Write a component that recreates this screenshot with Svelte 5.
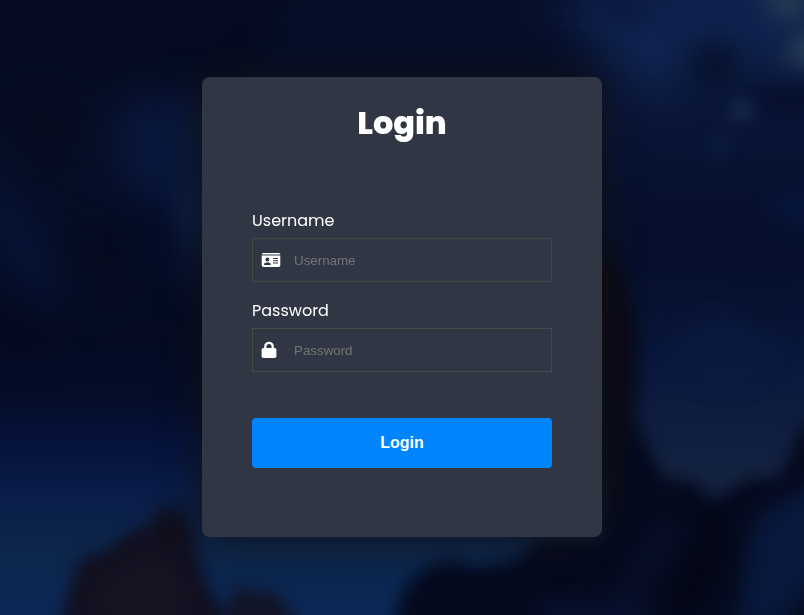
<script>
  let username = $state('');
  let password = $state('');
</script>

<main class="page">
  <svg class="backdrop" viewBox="0 0 804 615" preserveAspectRatio="xMidYMid slice" aria-hidden="true">
    <defs>
      <linearGradient id="sky" x1="0" y1="0" x2="0" y2="1">
        <stop offset="0" stop-color="#050b20" />
        <stop offset=".25" stop-color="#060e27" />
        <stop offset=".55" stop-color="#040b23" />
        <stop offset=".65" stop-color="#040d29" />
        <stop offset=".72" stop-color="#05123b" />
        <stop offset=".81" stop-color="#0a1e49" />
        <stop offset=".9" stop-color="#0d264c" />
        <stop offset="1" stop-color="#0b2856" />
      </linearGradient>
      <linearGradient id="east" x1="0" y1="0" x2="0" y2="1">
        <stop offset="0" stop-color="#0a1a45" />
        <stop offset=".18" stop-color="#0a183c" />
        <stop offset=".34" stop-color="#07112f" />
        <stop offset=".42" stop-color="#060f2b" />
        <stop offset=".57" stop-color="#09183d" />
        <stop offset=".73" stop-color="#152442" />
        <stop offset="1" stop-color="#15233f" />
      </linearGradient>
      <filter id="haze" x="-50%" y="-50%" width="200%" height="200%"><feGaussianBlur stdDeviation="20" /></filter>
      <filter id="soft" x="-50%" y="-50%" width="200%" height="200%"><feGaussianBlur stdDeviation="11" /></filter>
      <filter id="edge" x="-30%" y="-30%" width="160%" height="160%"><feGaussianBlur stdDeviation="8" /></filter>
    </defs>
    <rect width="804" height="615" fill="url(#sky)" />

    <!-- night clouds -->
    <g filter="url(#haze)">
      <path d="M560-50H870V680H560Z" fill="url(#east)" />
      <path d="M300-30H590L620 85H260Z" fill="#060f2a" />
      <path d="M550 0H660L804-30V58L750 65 720 35 690 50 670 95 620 75Z" fill="#10234f" />
      <path d="M110 120Q165 75 230 110V300L165 250 190 220 140 200 120 160Z" fill="#09183d" />
      <path d="M-20 170Q35 210 65 290 50 330 15 270L-20 220Z" fill="#061538" />
      <ellipse cx="95" cy="262" rx="30" ry="35" fill="#050b1e" />
      <ellipse cx="45" cy="130" rx="30" ry="40" fill="#050b1e" />
      <ellipse cx="20" cy="325" rx="35" ry="20" fill="#05091e" />
    </g>
    <g filter="url(#soft)">
      <path d="M600 0H646L648 24H600Z" fill="#0a193f" />
      <path d="M695 48L725 40 740 75 715 92 690 78Z" fill="#07132f" />
      <path d="M758-20H808V14L779 22Z" fill="#263a54" />
      <path d="M785 55L804 28 830 40V68L785 62Z" fill="#2a3f58" />
      <path d="M755 90H825V112H760Z" fill="#060d2a" />
      <ellipse cx="147" cy="228" rx="22" ry="9" fill="#050b22" />
      <ellipse cx="195" cy="210" rx="16" ry="32" fill="#0c1d42" />
      <ellipse cx="727" cy="350" rx="48" ry="34" fill="#0a1b46" opacity=".5" />
      <ellipse cx="798" cy="208" rx="25" ry="18" fill="#081944" opacity=".65" />
      <ellipse cx="762" cy="312" rx="18" ry="12" fill="#07112c" />
    </g>
    <g filter="url(#edge)">
      <ellipse cx="742" cy="111" rx="10" ry="10" fill="#1c2d50" />
      <ellipse cx="718" cy="145" rx="11" ry="12" fill="#0c1c3c" />
    </g>

    <!-- foreground rocks -->
    <g filter="url(#edge)">
      <path d="M590 255H620L631 300 638 345 634 420 649 448 665 478 694 480 711 501 728 492 746 478 778 478 789 458 797 435 830 400V640H388L404 588 430 565 450 560 475 568 515 560 540 538H600Z" fill="#050a1e" />
      <path d="M600 240L622 270 637 320 638 385 628 435 620 490 600 510Z" fill="#0b0b19" />
      <path d="M60 640L67 595 80 560 108 550 128 533 149 526 158 508 183 507 193 528 199 570 219 607 227 640Z" fill="#11101f" />
      <path d="M220 640L227 604 240 584 257 593 273 590 297 620V640Z" fill="#121427" />
    </g>
    <g filter="url(#soft)">
      <path d="M755 520L785 500 825 480V570L785 620 735 640 745 570Z" fill="#08193d" />
      <path d="M655 520L685 535 660 565 635 600 605 635 622 575Z" fill="#080f29" />
      <path d="M705 500L728 520 715 580 690 620 665 610 694 545Z" fill="#030615" />
      <path d="M545 600L650 605V630H540Z" fill="#071130" />
      <path d="M93 580L155 548 185 560 195 630H90Z" fill="#161323" />
    </g>
  </svg>

  <form class="card" onsubmit={(e) => e.preventDefault()}>
    <h1>Login</h1>
    <div class="field">
      <label for="username">Username</label>
      <div class="control">
        <svg class="icon" width="20" height="16" viewBox="0 0 20 16" aria-hidden="true">
          <path fill="#fff" d="M.7 2.6Q.7 1 2.2 1H17.8Q19.3 1 19.3 2.6Z" />
          <path fill="#fff" fill-rule="evenodd" d="M.7 3.6H19.3V13.3Q19.3 15 17.5 15H2.5Q.7 15 .7 13.3ZM6.4 5.6A2 2 0 1 0 6.4 9.6 2 2 0 0 0 6.4 5.6ZM5.5 10.4Q3 10.4 3 12.5 3 12.9 3.4 12.9H9.4Q9.8 12.9 9.8 12.5 9.8 10.4 7.3 10.4ZM12 6H17V7H12ZM12 8.2H17V9.2H12ZM12 10.4H17V11.4H12Z" />
        </svg>
        <input id="username" type="text" placeholder="Username" bind:value={username} />
      </div>
    </div>
    <div class="field">
      <label for="password">Password</label>
      <div class="control">
        <svg class="icon" width="20" height="18" viewBox="0 0 20 18" aria-hidden="true">
          <path d="M4.3 8V5.5a3.7 3.7 0 0 1 7.4 0V8" fill="none" stroke="#fff" stroke-width="2.3" />
          <rect x=".6" y="7" width="14.8" height="10" rx="1.8" fill="#fff" />
        </svg>
        <input id="password" type="password" placeholder="Password" bind:value={password} />
      </div>
    </div>
    <button type="submit">Login</button>
  </form>
</main>

<style>
  .page {
    position: relative;
    box-sizing: border-box;
    height: 100vh;
    min-height: 615px;
    padding-top: 77px;
    overflow: hidden;
    background: #050b20;
    color: #fff;
    font-family: Poppins, Inter, sans-serif;
  }
  .backdrop {
    position: absolute;
    inset: 0;
    width: 100%;
    height: 100%;
  }
  .backdrop filter {
    color-interpolation-filters: sRGB;
  }
  .card {
    position: relative;
    display: flex;
    flex-direction: column;
    box-sizing: border-box;
    width: 400px;
    height: 460px;
    margin: 0 auto;
    padding: 22px 50px 0;
    border-radius: 8px;
    background: #313645;
    box-shadow: 0 0 40px rgba(18, 18, 18, 0.85);
  }
  h1 {
    margin: 0 0 61px;
    font-size: 32px;
    font-weight: 800;
    line-height: 48px;
    text-align: center;
  }
  .field {
    height: 90px;
  }
  label {
    display: block;
    height: 30px;
    font-size: 16px;
    line-height: 26px;
  }
  .control {
    display: flex;
    align-items: center;
    box-sizing: border-box;
    height: 44px;
    padding-left: 8px;
    border: 1px solid #4b4947;
  }
  .icon {
    flex: none;
  }
  input {
    flex: 1;
    min-width: 0;
    height: 40px;
    margin-left: 13px;
    padding: 0;
    border: 0;
    outline: 0;
    background: transparent;
    color: #fff;
    font: 13.333px "Liberation Sans", Arial, sans-serif;
  }
  input::placeholder {
    color: #757575;
    opacity: 1;
  }
  button {
    height: 50px;
    margin-top: 30px;
    padding: 0;
    border: 0;
    border-radius: 4px;
    background: #0085ff;
    color: #fff;
    font: bold 16px "Liberation Sans", Arial, sans-serif;
    cursor: pointer;
  }
</style>
